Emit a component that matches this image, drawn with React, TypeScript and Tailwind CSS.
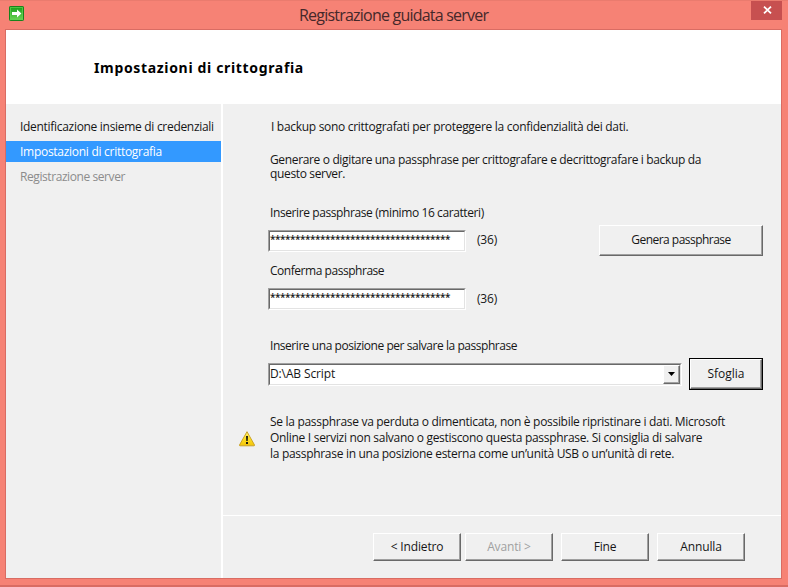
import type { ReactNode } from 'react';

function RaisedButton({ children, className, disabled }: { children: ReactNode; className: string; disabled?: boolean }) {
  return (
    <button
      disabled={disabled}
      className={`flex shrink-0 items-center justify-center border border-t-white border-l-white border-r-[#696969] border-b-[#696969] bg-[#f0f0f0] shadow-[inset_-1px_-1px_0_#a0a0a0] ${disabled ? 'text-[#a0a0a0]' : 'text-[#161616]'} ${className}`}
    >
      {children}
    </button>
  );
}

function SunkenBox({ children, className }: { children: ReactNode; className: string }) {
  return (
    <div className={`border border-t-[#a0a0a0] border-l-[#a0a0a0] border-r-white border-b-white ${className}`}>
      <div className="flex h-full w-full border border-t-[#696969] border-l-[#696969] border-r-[#e3e3e3] border-b-[#e3e3e3] bg-white">
        {children}
      </div>
    </div>
  );
}

function PassphraseRow({ countClass }: { countClass: string }) {
  return (
    <div className="flex h-[22px] items-center">
      <SunkenBox className="-ml-[2px] h-[22px] w-[198px]">
        <span className="font-['Open_Sans',sans-serif] text-[10px] leading-[15px] font-semibold tracking-[-0.48px]">
          {'*'.repeat(36)}
        </span>
      </SunkenBox>
      <span className={`ml-[11px] leading-[18px] tracking-[-0.2px] ${countClass}`}>(36)</span>
    </div>
  );
}

function WarningIcon() {
  return (
    <svg width="17" height="16" viewBox="0 0 17 16" className="mt-[2px] ml-px shrink-0">
      <defs>
        <linearGradient id="warn" x1="0" y1="0" x2="0" y2="1">
          <stop offset="0" stopColor="#fff27a" />
          <stop offset="0.5" stopColor="#ffdf20" />
          <stop offset="1" stopColor="#f2c30c" />
        </linearGradient>
      </defs>
      <path d="M8 .7 L15.5 14 Q15.7 14.8 15 14.8 H1 Q.3 14.8 .5 14 Z" fill="url(#warn)" stroke="#c9a227" strokeWidth="1" strokeLinejoin="round" />
      <path d="M7 5h2l-.3 5H7.3z" fill="#1c1a10" />
      <rect x="7" y="11" width="2" height="2" fill="#1c1a10" />
    </svg>
  );
}

function AppIcon() {
  return (
    <svg width="15" height="15" viewBox="0 0 15 15" className="mt-[5px] ml-[9px] shrink-0">
      <defs>
        <linearGradient id="app" x1="0" y1="0" x2="0" y2="1">
          <stop offset="0" stopColor="#159a18" />
          <stop offset="1" stopColor="#6fd657" />
        </linearGradient>
      </defs>
      <rect x="0.5" y="0.5" width="14" height="14" rx="0.7" fill="url(#app)" stroke="#18831b" />
      <rect x="1.5" y="1.5" width="12" height="12" fill="none" stroke="#5fd04f" strokeOpacity="0.75" />
      <path d="M3 6h5V3.5L12.4 7.5 8 11.5V9H3z" fill="#fff" />
    </svg>
  );
}

export default function App() {
  return (
    <div className="flex h-[587px] w-[788px] flex-col overflow-hidden border-t border-b-2 border-t-[#ea7b6e] border-b-[#d96c63] bg-[#f68275] font-['Open_Sans',sans-serif] text-[12px] text-[#161616]">
      <div className="flex h-[28px] shrink-0 items-start">
        <div className="w-[299px]">
          <AppIcon />
        </div>
        <h1 className="w-[452px] pt-[4px] text-[16px] leading-[20px] tracking-[-0.78px] whitespace-nowrap text-[#45282a]">
          Registrazione guidata server
        </h1>
        <button aria-label="Chiudi" className="-mt-px flex h-[20px] w-[31px] items-center justify-center bg-[#c75050]">
          <svg width="9" height="8" viewBox="0 0 9 8" className="ml-px">
            <path d="M1 .7L8 7.3M8 .7L1 7.3" stroke="#fff" strokeWidth="1.8" />
          </svg>
        </button>
      </div>
      <div className="ml-[5px] flex h-[550px] w-[777px] shrink-0 flex-col border border-[#d96c63] bg-white">
        <header className="h-[74px] shrink-0 pt-[28px] pl-[88px]">
          <h2 className="font-['Noto_Sans',sans-serif] text-[14px] leading-[20px] font-bold tracking-[0.66px] whitespace-nowrap text-black">
            Impostazioni di crittografia
          </h2>
        </header>
        <div className="flex min-h-0 flex-1 gap-[2px]">
          <nav className="flex w-[215px] shrink-0 flex-col gap-1 bg-[#f0f0f0] pt-[12px] leading-[21px] whitespace-nowrap">
            <div className="h-[21px] pl-[14px] tracking-[-0.3px]">Identificazione insieme di credenziali</div>
            <div className="h-[21px] bg-[#3399ff] pl-[14px] tracking-[-0.28px] text-white">Impostazioni di crittografia</div>
            <div className="h-[21px] pl-[14px] tracking-[-0.42px] text-[#8c8c8c]">Registrazione server</div>
          </nav>
          <div className="flex min-w-0 flex-1 flex-col bg-[#f0f0f0]">
            <main className="h-[411px] shrink-0 pl-[47px] leading-4 whitespace-nowrap">
              <p className="pt-[15px] pl-px tracking-[-0.3px]">I backup sono crittografati per proteggere la confidenzialità dei dati.</p>
              <p className="mt-[18px] leading-[14px] tracking-[-0.35px]">
                Generare o digitare una passphrase per crittografare e decrittografare i backup da
                <br />
                questo server.
              </p>
              <div className="mt-[24px] flex">
                <div className="w-[329px]">
                  <p className="tracking-[-0.4px]">Inserire passphrase (minimo 16 caratteri)</p>
                  <div className="mt-[9px]">
                    <PassphraseRow countClass="pb-[2px]" />
                  </div>
                  <p className="mt-[11px] tracking-[-0.46px]">Conferma passphrase</p>
                  <div className="mt-[9px]">
                    <PassphraseRow countClass="pb-0" />
                  </div>
                </div>
                <RaisedButton className="mt-[20px] h-[31px] w-[164px] pb-px tracking-[-0.53px]">Genera passphrase</RaisedButton>
              </div>
              <p className="mt-[28px] tracking-[-0.45px]">Inserire una posizione per salvare la passphrase</p>
              <div className="mt-[4px] -ml-[2px] flex h-[32px] items-center gap-[7px]">
                <SunkenBox className="h-[23px] w-[414px]">
                  <span className="flex-1 leading-[18px] tracking-[-0.12px]">D:\AB Script</span>
                  <RaisedButton className="h-[19px] w-[17px]">
                    <svg width="7" height="4" viewBox="0 0 7 4">
                      <path d="M0 0h7L3.5 4z" fill="#000" />
                    </svg>
                  </RaisedButton>
                </SunkenBox>
                <div className="h-[32px] w-[74px] border border-black">
                  <RaisedButton className="h-[30px] w-[72px] pb-px tracking-[0px]">Sfoglia</RaisedButton>
                </div>
              </div>
              <div className="mt-[24px] -ml-[32px] flex items-center gap-[14px]">
                <WarningIcon />
                <p className="tracking-[-0.3px]">
                  Se la passphrase va perduta o dimenticata, non è possibile ripristinare i dati. Microsoft
                  <br />
                  Online I servizi non salvano o gestiscono questa passphrase. Si consiglia di salvare
                  <br />
                  la passphrase in una posizione esterna come un’unità USB o un’unità di rete.
                </p>
              </div>
            </main>
            <footer className="flex flex-1 items-start border-t border-white pt-[17px] pl-[150px] tracking-[-0.15px]">
              <RaisedButton className="mr-[4px] h-[28px] w-[88px]">&lt; Indietro</RaisedButton>
              <RaisedButton disabled className="mr-[8px] h-[28px] w-[88px]">Avanti &gt;</RaisedButton>
              <RaisedButton className="mr-[8px] h-[28px] w-[88px]">Fine</RaisedButton>
              <RaisedButton className="h-[28px] w-[88px]">Annulla</RaisedButton>
            </footer>
          </div>
        </div>
      </div>
    </div>
  );
}
